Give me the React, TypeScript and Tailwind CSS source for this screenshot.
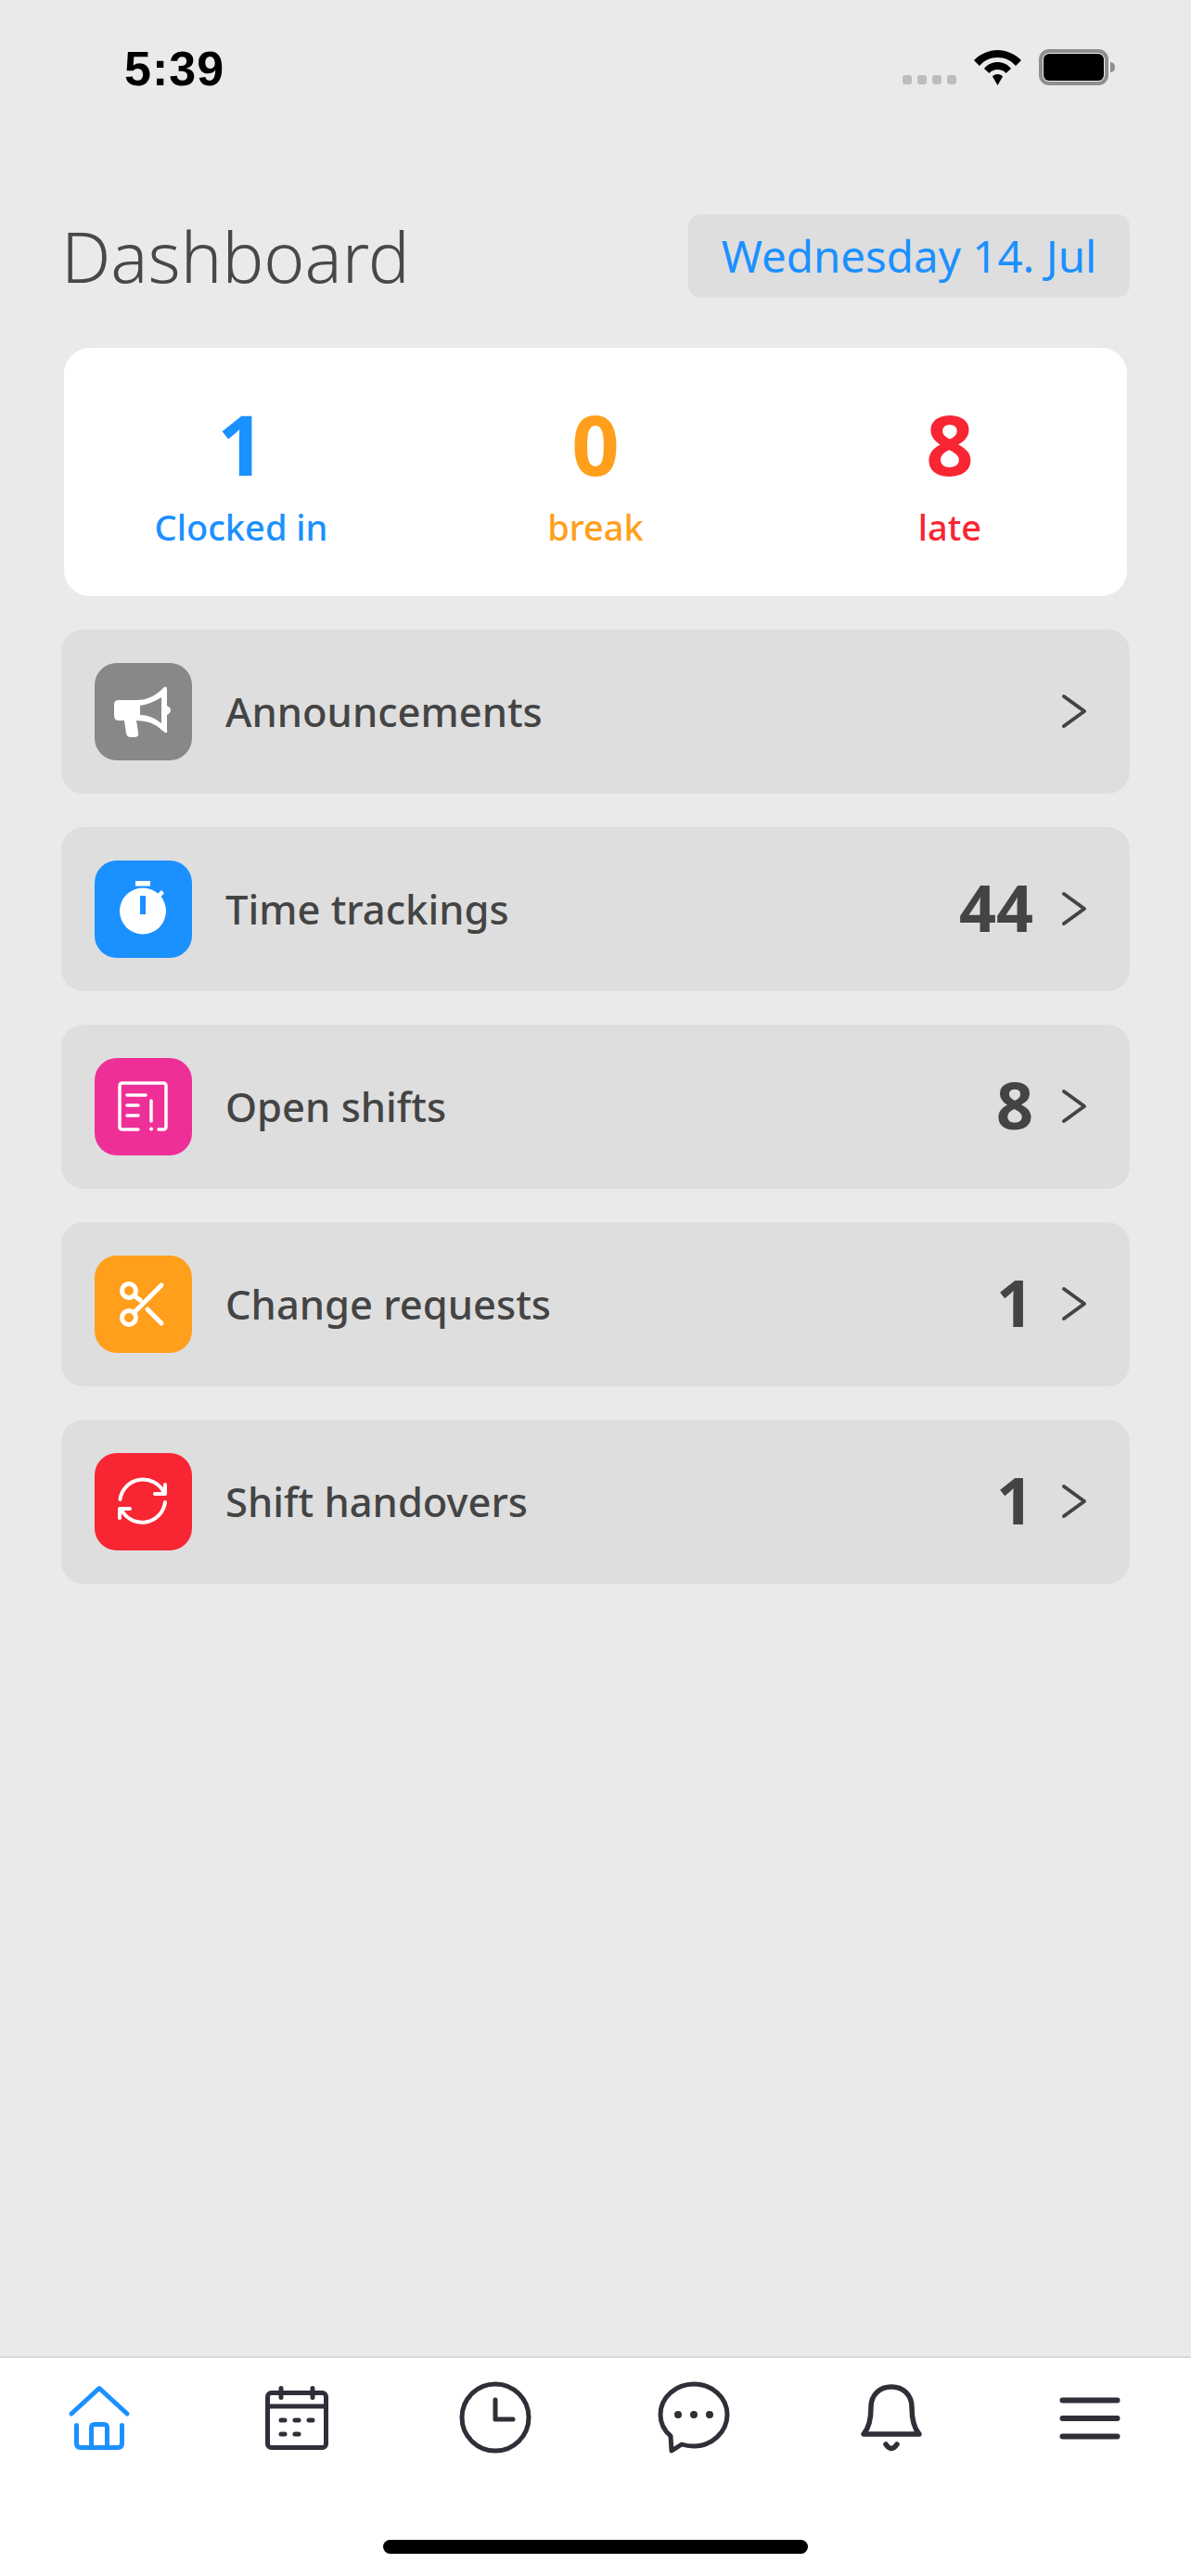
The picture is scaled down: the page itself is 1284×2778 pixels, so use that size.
const F = "[font-family:'Noto_Sans','Open_Sans',sans-serif]";

function Megaphone() {
  return (
    <svg viewBox="0 0 105 105" className="w-[105px] h-[105px]">
      <path d="M26 40 Q21 40 21 45 V57 Q21 62 26 62 H32 L34 76 Q35 80 39 80 H43 Q48 80 47 75 L45 62 Q62 62 72 72 L76 75 Q79 76 78 72 V56 Q82 54 82 51 Q82 48 78 46 V28 Q78 25 75 26 Q62 40 45 40 Z M49 46 Q61 44 72 37 V65 Q61 56 49 56 Z" fill="#fff" fillRule="evenodd" />
    </svg>
  );
}
function Stopwatch() {
  return (
    <svg viewBox="0 0 105 105" className="w-[105px] h-[105px]">
      <rect x="44" y="22" width="16" height="5.5" fill="#fff" />
      <path d="M67 37 L72 32 L75 35 L70 41 Z" fill="#fff" />
      <circle cx="52" cy="54.5" r="25" fill="#fff" />
      <rect x="49" y="38" width="6" height="20" fill="#1b90ff" />
    </svg>
  );
}
function Shifts() {
  return (
    <svg viewBox="0 0 105 105" className="w-[105px] h-[105px]" fill="none" stroke="#fff" strokeWidth="3.5" strokeLinecap="round" strokeLinejoin="round">
      <path d="M47 77 H30 Q27 77 27 74 V30 Q27 27 30 27 H74 Q77 27 77 30 V74 Q77 77 74 77 H69" />
      <path d="M35 40 H55 M35 51 H47 M35 62 H47 M61 46 V68" />
      <path d="M61 76.5 V76.6" strokeWidth="4" />
    </svg>
  );
}
function Scissors() {
  return (
    <svg viewBox="0 0 105 105" className="w-[105px] h-[105px]" fill="none" stroke="#fff" strokeWidth="5" strokeLinecap="round">
      <circle cx="37" cy="38" r="7.5" />
      <circle cx="37" cy="67" r="7.5" />
      <path d="M45 45 L49 48 M72 32 L44 60 M57 58 L72 73" />
    </svg>
  );
}
function Sync() {
  return (
    <svg viewBox="0 0 105 105" className="w-[105px] h-[105px]" fill="none" stroke="#fff" strokeWidth="4" strokeLinecap="round" strokeLinejoin="round">
      <path d="M27.5 50 A25 25 0 0 1 75 43" />
      <path d="M76 53 A25 25 0 0 1 30 63" />
      <path d="M76 34 V44 H65" />
      <path d="M27 70 V60 H38" />
    </svg>
  );
}

const rows = [
  { label: "Announcements", count: "", bg: "bg-[#888888]", Icon: Megaphone },
  { label: "Time trackings", count: "44", bg: "bg-[#1b90ff]", Icon: Stopwatch },
  { label: "Open shifts", count: "8", bg: "bg-[#ee2f97]", Icon: Shifts },
  { label: "Change requests", count: "1", bg: "bg-[#ff9f1c]", Icon: Scissors },
  { label: "Shift handovers", count: "1", bg: "bg-[#f82533]", Icon: Sync },
];

const stats = [
  { n: "1", label: "Clocked in", c: "text-[#1b90ff]" },
  { n: "0", label: "break", c: "text-[#ff9f1c]" },
  { n: "8", label: "late", c: "text-[#f82533]" },
];

function NavHome() {
  return (
    <svg width="68" height="78" viewBox="0 0 68 78" fill="none" stroke="#1b90ff" strokeWidth="5" strokeLinecap="round" strokeLinejoin="round">
      <path d="M4 35 L34 7.5 L64 35" />
      <path d="M9.5 47.5 V67 Q9.5 71.5 14 71.5 H54 Q58.5 71.5 58.5 67 V47.5" />
      <path d="M25.5 71.5 V50 Q25.5 46.5 29 46.5 H39 Q42.5 46.5 42.5 50 V71.5" />
    </svg>
  );
}
function NavCal() {
  return (
    <svg width="68" height="78" viewBox="0 0 68 78" fill="none" stroke="#2f2f38" strokeWidth="5" strokeLinecap="round" strokeLinejoin="round">
      <rect x="2.5" y="12.5" width="63" height="59" rx="4" />
      <path d="M2.5 27 H65.5 M17 7.5 V17.5 M51 7.5 V17.5" />
      <path d="M17 42 H21 M32 42 H36 M47 42 H51 M17 57 H21 M32 57 H36" />
    </svg>
  );
}
function NavClock() {
  return (
    <svg width="78" height="78" viewBox="0 0 78 78" fill="none" stroke="#2f2f38" strokeWidth="5" strokeLinecap="round" strokeLinejoin="round">
      <circle cx="39" cy="39" r="36" />
      <path d="M39 20 V41 H58" />
    </svg>
  );
}
function NavChat() {
  return (
    <svg width="78" height="78" viewBox="0 0 78 78" fill="none" stroke="#2f2f38" strokeWidth="5" strokeLinecap="round" strokeLinejoin="round">
      <path d="M14 59 L15 75 L26 68 Q32 70 39 70 C58 70 75 55 75 36 C75 17 58 3 39 3 C20 3 3 17 3 36 C3 45 7 53 14 59 Z" />
      <circle cx="22" cy="36" r="4" fill="#2f2f38" stroke="none" />
      <circle cx="39" cy="36" r="4" fill="#2f2f38" stroke="none" />
      <circle cx="56" cy="36" r="4" fill="#2f2f38" stroke="none" />
    </svg>
  );
}
function NavBell() {
  return (
    <svg width="66" height="74" viewBox="0 0 66 74" fill="none" stroke="#2f2f38" strokeWidth="5.5" strokeLinecap="round" strokeLinejoin="round" className="mt-[3px]">
      <path d="M3 54 H63 Q55 45 55 25 C55 11 45 3 33 3 C21 3 11 11 11 25 Q11 45 3 54 Z" />
      <path d="M27 65 Q33 74 39 65" />
    </svg>
  );
}
function NavMenu() {
  return (
    <svg width="66" height="48" viewBox="0 0 66 48" fill="none" stroke="#2f2f38" strokeWidth="6" strokeLinecap="round" className="mt-[17px]">
      <path d="M3.5 3.5 H62.5 M3.5 23 H62.5 M3.5 42.5 H62.5" />
    </svg>
  );
}

export default function App() {
  return (
    <div className={`w-[1284px] h-[2778px] bg-[#eaeaea] flex flex-col ${F}`}>
      <div className="h-[231px] shrink-0 flex items-start justify-between pl-[134px] pr-[82px] pt-[46px]">
        <span className="[font-family:'Liberation_Sans',sans-serif] font-bold text-[52px] leading-[56px] tracking-[1px] text-black">5:39</span>
        <div className="flex items-end gap-[19px] pt-[7px]">
          <div className="flex gap-[6px] pb-[1px]">
            <span className="w-[10px] h-[10px] rounded-[3px] bg-[#bcbcbc]" />
            <span className="w-[10px] h-[10px] rounded-[3px] bg-[#bcbcbc]" />
            <span className="w-[10px] h-[10px] rounded-[3px] bg-[#bcbcbc]" />
            <span className="w-[10px] h-[10px] rounded-[3px] bg-[#bcbcbc]" />
          </div>
          <svg width="51" height="38" viewBox="0 0 51 38">
            <path d="M25.5 0 C35 0 44 4 51 11 L45 17 C40 11 33 8 25.5 8 C18 8 11 11 6 17 L0 11 C7 4 16 0 25.5 0 Z" fill="#000" />
            <path d="M25.5 13 C31 13 36 15 40 20 L34.5 25 C32 22 29 21 25.5 21 C22 21 19 22 16.5 25 L11 20 C15 15 20 13 25.5 13 Z" fill="#000" />
            <path d="M25.5 26 C28 26 30 27 31 28.5 L25.5 38 L20 28.5 C21 27 23 26 25.5 26 Z" fill="#000" />
          </svg>
          <div className="flex items-center">
            <div className="w-[75px] h-[39px] rounded-[11px] border-[4px] border-[#8e8e8e] p-[1px] bg-[#eaeaea]">
              <div className="w-full h-full rounded-[6px] bg-black" />
            </div>
            <div className="w-[5px] h-[11px] rounded-r-[5px] bg-[#8e8e8e] ml-[2px]" />
          </div>
        </div>
      </div>

      <div className="flex items-center justify-between pl-[66px] pr-[66px] h-[90px] shrink-0">
        <h1 className="font-light text-[75px] leading-[90px] text-[#484848]">Dashboard</h1>
        <div className="w-[476px] h-[90px] rounded-[14px] bg-[#dedede] flex items-center justify-center text-[47.5px] text-[#1b90ff] whitespace-nowrap">Wednesday 14. Jul</div>
      </div>

      <div className="ml-[69px] mr-[69px] mt-[54px] h-[268px] rounded-[28px] bg-white grid grid-cols-3 items-center shrink-0">
        {stats.map((s) => (
          <div key={s.label} className="flex flex-col items-center pt-[9px]">
            <span className={`font-bold text-[90px] leading-[92px] -mt-[2px] ${s.c}`}>{s.n}</span>
            <span className={`font-medium text-[38px] leading-[50px] mt-[19px] ${s.c}`}>{s.label}</span>
          </div>
        ))}
      </div>

      <div className="mx-[66px] mt-[36px] flex flex-col gap-[36px]">
        {rows.map(({ label, count, bg, Icon }) => (
          <div key={label} className="h-[177px] rounded-[24px] bg-[#dedede] flex items-center pl-[36px] pr-[46px]">
            <div className={`w-[105px] h-[105px] rounded-[24px] ${bg}`}><Icon /></div>
            <span className="ml-[36px] font-medium text-[43.5px] text-[#444444] flex-1">{label}</span>
            {count && <span className="font-bold text-[70px] leading-[80px] pb-[6px] text-[#444444] mr-[30px]">{count}</span>}
            <svg width="28" height="38" viewBox="0 0 28 38" fill="none" stroke="#444444" strokeWidth="4" strokeLinecap="round" strokeLinejoin="round" className="-mt-[2px]">
              <path d="M3 3 L25 19 L3 35" />
            </svg>
          </div>
        ))}
      </div>

      <div className="mt-auto h-[237px] bg-white border-t-[2px] border-[#d9d9d9] flex flex-col items-center shrink-0">
        <div className="w-full grid grid-cols-6 justify-items-center pr-[2px] pt-[25px] h-[196px] items-start">
          <NavHome /><NavCal /><NavClock /><NavChat /><NavBell /><NavMenu />
        </div>
        <div className="w-[458px] h-[15px] rounded-full bg-black" />
      </div>
    </div>
  );
}
